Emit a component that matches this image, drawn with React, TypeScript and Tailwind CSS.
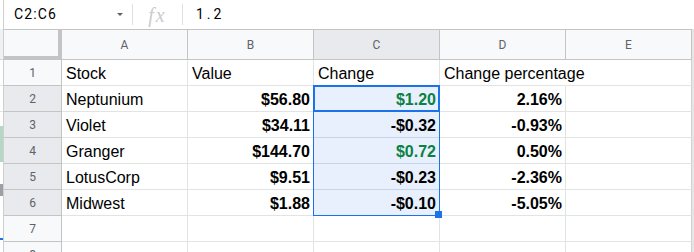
import React from 'react';

type Row = {
  name: string;
  value: string;
  change: string;
  pct: string;
  up?: boolean;
};

const rows: Row[] = [
  { name: 'Neptunium', value: '$56.80', change: '$1.20', pct: '2.16%', up: true },
  { name: 'Violet', value: '$34.11', change: '-$0.32', pct: '-0.93%' },
  { name: 'Granger', value: '$144.70', change: '$0.72', pct: '0.50%', up: true },
  { name: 'LotusCorp', value: '$9.51', change: '-$0.23', pct: '-2.36%' },
  { name: 'Midwest', value: '$1.88', change: '-$0.10', pct: '-5.05%' },
];

const cols = ['A', 'B', 'C', 'D', 'E'];

// strip of the sheet window sitting behind this one
const LeftEdge = () => (
  <div className="flex h-full w-[4px] shrink-0 flex-col border-r border-[#cfcfcf]">
    <div className="h-[29px] shrink-0 bg-white" />
    <div className="h-[31px] shrink-0 border-b border-[#d6d6d6] bg-[#f1f1f1]" />
    <div className="h-[26px] shrink-0 border-b border-[#e2e2e2] bg-white" />
    <div className="h-[26px] shrink-0 border-b border-[#e2e2e2] bg-white" />
    <div className="h-[14px] shrink-0 bg-white" />
    <div className="h-[36px] shrink-0 bg-[#b3d9c2]" />
    <div className="h-[22px] shrink-0 bg-white" />
    <div className="h-[12px] shrink-0 bg-[#9aa0a6]" />
    <div className="h-[42px] shrink-0 bg-white" />
    <div className="h-[2px] shrink-0 bg-[#1a73e8]" />
    <div className="flex-1 bg-white" />
  </div>
);

const FormulaBar = () => (
  <div className="flex h-[29px] shrink-0 items-center bg-white font-['Roboto',sans-serif] text-black">
    <div className="flex w-[128px] items-center justify-between pb-[1px] pl-[10px] pr-[9px]">
      <span className="text-[14px] tracking-[1.1px]">C2:C6</span>
      <span className="mt-[1px] h-0 w-0 border-x-[3px] border-t-[3px] border-x-transparent border-t-[#5f6368]" />
    </div>
    <div className="h-[21px] w-px bg-[#e0e0e0]" />
    <div className="flex w-[49px] justify-center">
      <span className="font-['Liberation_Serif',serif] text-[20px] italic leading-none tracking-[2px] text-[#c9cccf]">
        fx
      </span>
    </div>
    <div className="h-[21px] w-px bg-[#e0e0e0]" />
    <span className="pb-[1px] pl-[13px] text-[14px] tracking-[3px]">1.2</span>
  </div>
);

const HeaderRow = () => (
  <div className="flex h-[31px] border-t border-[#c4c4c4] font-['Roboto',sans-serif] text-[12px] text-[#5f6368]">
    <div className="h-full w-[58px] border-b-4 border-r-4 border-[#c4c4c4] bg-[#f8f9fa]" />
    {cols.map((c) => (
      <div
        key={c}
        className={`flex h-full w-[126px] items-center justify-center border-b border-r border-[#c4c4c4] ${
          c === 'C' ? 'bg-[#e8eaed]' : 'bg-[#f8f9fa]'
        }`}
      >
        {c}
      </div>
    ))}
  </div>
);

const RowHead = ({ n, sel }: { n: number; sel?: boolean }) => (
  <div
    className={`flex h-full w-[58px] items-center justify-center border-b border-r border-[#c4c4c4] font-['Roboto',sans-serif] text-[12px] text-[#5f6368] ${
      sel ? 'bg-[#e8eaed]' : 'bg-[#f8f9fa]'
    }`}
  >
    {n}
  </div>
);

const Cell = ({
  children,
  right,
  className = '',
}: {
  children?: React.ReactNode;
  right?: boolean;
  className?: string;
}) => (
  <div
    className={`flex h-full w-[126px] items-end whitespace-nowrap border-b border-r pb-[2px] leading-[18px] ${
      right ? 'justify-end pr-[3px] font-bold' : 'pl-[4px]'
    } ${className || 'border-[#e2e3e3]'}`}
  >
    {children}
  </div>
);

export default function App() {
  return (
    <div className="flex h-[252px] w-[694px] overflow-hidden bg-white">
      <LeftEdge />
      <div className="flex w-[690px] flex-col">
        <FormulaBar />
        <div className="relative flex shrink-0 font-['Liberation_Sans',Arial,sans-serif] text-[16px] text-black">
          <div className="w-[688px]">
            <HeaderRow />

            {/* row 1: titles */}
            <div className="flex h-[26px]">
              <RowHead n={1} />
              <Cell>Stock</Cell>
              <Cell>Value</Cell>
              <Cell>Change</Cell>
              <Cell className="relative z-10 border-b-[#e2e3e3] border-r-transparent">Change percentage</Cell>
              <Cell className="border-b-[#e2e3e3] border-r-[#d0d0d0]" />
            </div>

            {rows.map((r, i) => (
              <div key={r.name} className="flex h-[26px]">
                <RowHead n={i + 2} sel />
                <Cell>{r.name}</Cell>
                <Cell right>{r.value}</Cell>
                <Cell
                  right
                  className={`border-[#c8d4e6] bg-[#e8f0fe] ${r.up ? 'text-[#0b8043]' : ''}`}
                >
                  {r.change}
                </Cell>
                <Cell right>{r.pct}</Cell>
                <Cell className="border-b-[#e2e3e3] border-r-[#d0d0d0]" />
              </div>
            ))}

            {[7, 8].map((n) => (
              <div key={n} className="flex h-[26px]">
                <RowHead n={n} />
                <Cell />
                <Cell />
                <Cell />
                <Cell />
                <Cell className="border-b-[#e2e3e3] border-r-[#d0d0d0]" />
              </div>
            ))}
          </div>
          <div className="w-[2px] bg-[#e6e6e6]" />

          {/* selection C2:C6 */}
          <div className="pointer-events-none absolute left-[309px] top-[56px] h-[131px] w-[127px] border border-[#1a73e8]" />
          <div className="pointer-events-none absolute left-[309px] top-[56px] h-[27px] w-[127px] border-2 border-[#1a73e8]" />
          <div className="absolute left-[431px] top-[182px] h-[7px] w-[7px] bg-[#1a73e8]" />
        </div>
      </div>
    </div>
  );
}
